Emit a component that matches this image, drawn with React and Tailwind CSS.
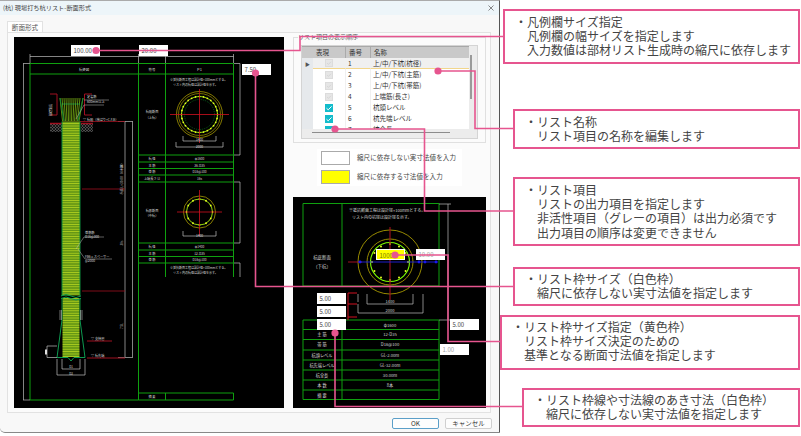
import React from 'react';

const CJK = "font-['Noto_Sans_CJK_JP','Liberation_Sans',sans-serif]";

const rows = [
  { no: 1, name: '上/中/下杭(杭径)', on: false },
  { no: 2, name: '上/中/下杭(主筋)', on: false },
  { no: 3, name: '上/中/下杭(帯筋)', on: false },
  { no: 4, name: '上端筋(長さ)', on: false },
  { no: 5, name: '杭頭レベル', on: true },
  { no: 6, name: '杭先端レベル', on: true },
  { no: 7, name: '杭全長', on: true },
];

const G = '#0fa00f';
const W = '#bdbdbd';
const R = '#a01020';

function Ln({ d, c = G, w = 0.9 }) {
  return <path d={d} fill="none" stroke={c} strokeWidth={w} />;
}

function T({ x, y, s = 3.2, a = 'middle', c = '#d8d8d8', children, rot }) {
  return (
    <text x={x} y={y} fontSize={s} textAnchor={a} fill={c} transform={rot ? `rotate(${rot} ${x} ${y})` : undefined}>
      {children}
    </text>
  );
}

function Rebar({ cx, cy, r, n = 24, dot = 0.9 }) {
  const pts = [];
  for (let i = 0; i < n; i++) {
    const a = (i / n) * Math.PI * 2;
    pts.push(<circle key={i} cx={cx + r * Math.cos(a)} cy={cy + r * Math.sin(a)} r={dot} fill="#e8ff20" />);
  }
  return <g>{pts}</g>;
}

function LeftDrawing() {
  return (
    <svg viewBox="14 37 270 371" className={`w-[270px] h-[371px] block ${CJK}`}>
      <defs>
        <pattern id="mesh" width="2" height="2.4" patternUnits="userSpaceOnUse">
          <rect width="2" height="2.4" fill="#3d6f12" />
          <path d="M1 0V2.4" stroke="#a4d61a" strokeWidth="0.7" />
          <path d="M0 1.2H2" stroke="#d2ec24" strokeWidth="0.6" />
        </pattern>
        <pattern id="gravel" width="3" height="3" patternUnits="userSpaceOnUse">
          <circle cx="1.5" cy="1.5" r="1" fill="none" stroke="#9a9a9a" strokeWidth="0.5" />
        </pattern>
      </defs>

      {/* frame */}
      <Ln d="M30 63.5H233.5M30 74H233.5M30 63.5V400H138.5M138.5 63.5V400M165.5 63.5V277M233.5 63.5V277" w={1} />
      <Ln d="M138.5 155H233.5M138.5 162H233.5M138.5 168.5H233.5M138.5 175H233.5M138.5 182H233.5" w={1} />
      <Ln d="M138.5 243H233.5M138.5 250H233.5M138.5 256.5H233.5M138.5 263H233.5" w={1} />
      <Ln d="M138.5 393H233.5V400H138.5M165.5 393V400" w={1} />

      {/* dimensions */}
      <Ln c={W} w={0.7} d="M30 56.5H233.5M30 54V63M138.5 54V63M165.5 54V63M233.5 54V63" />
      <Ln c={W} w={0.7} d="M23.5 63.5V400M23 63.5H30M23 400H30" />
      <Ln c={W} w={0.7} d="M240 63.5V155M234 63.5H240M234 155H240M240 182V243M234 182H240M234 243H240M240 263V277M234 263H240" />
      <Ln c={W} w={0.7} d="M125 121.5V357M132.5 121.5V357M118 121.5H133M118 357.5H133" />

      <T x={84} y={70.5} s={3.4}>杭姿図</T>
      <T x={152} y={70.5} s={3.4}>符号</T>
      <T x={199.5} y={71} s={4}>P1</T>

      {/* pile head */}
      {[60, 62, 64, 66, 68, 70, 72, 74, 76, 78, 80, 83].map((x, i) => (
        <Ln key={i} c="#8fcf18" w={0.7} d={`M${x} 98L${62.5 + i * 1.5} 121`} />
      ))}
      <Ln c="#0b8a3a" d="M60 98L64 121M83 98L78 121" />
      <Ln c="#1cc060" w={0.6} d="M62 104H80" />
      <Ln c={R} w={1} d="M50 94H57V115H50M92 94H84.5V115H92" />
      <rect x="50" y="123" width="12" height="9" fill="url(#gravel)" />
      <rect x="81" y="123" width="12" height="9" fill="url(#gravel)" />
      <Ln c={R} w={1.4} d="M50 123.5H62M81 123.5H93" />
      <Ln c={R} w={0.8} d="M80 121.5H125" />
      <T x={52} y={110} s={3} rot={-90}>基礎筋長</T>
      <T x={87} y={98} a="start">定着筋</T>
      <T x={87} y={103} a="start">600mm以上</T>
      <Ln c={W} w={0.5} d="M84 100H109M84 105H104M84 105L76 119" />
      <T x={83} y={120.5} a="start">▽ 杭頭（桟ばり+C.F.B）</T>

      {/* pile shaft */}
      <rect x="62" y="121.5" width="18" height="174" fill="url(#mesh)" />
      <rect x="62.5" y="298" width="17" height="59" fill="url(#mesh)" />
      <Ln c="#0b8a3a" d="M62 121.5V296M80 121.5V296M62 298V320M80 298V320" w={1} />
      <Ln c="#0d9a50" w={1} d="M61 296Q66 293 71 296T81 296M61 298.5Q66 295.5 71 298.5T81 298.5" />
      <Ln c={R} w={0.8} d="M82 189H125M82 291H125" />
      <T x={123} y={178} s={3.2} rot={-90}>杭長 L=30.00（6本継）</T>
      <T x={123} y={243} s={3} rot={-90}>30s</T>
      <T x={123} y={326} s={3} rot={-90}>7.5L</T>

      {/* bulb */}
      <Ln c="#0d9a50" w={1} d="M62 320L57 357.5H68L71 361L74 357.5H85L80 320" />
      <Ln c={W} w={0.6} d="M60 310V320M61.5 310V320M82 310V320M80.5 310V320" />
      <Ln c={W} w={0.7} d="M62 359V369H80V359M57 359V375H85V359M47 346H57M47 357.5H57M47 346V357.5" />
      <rect x="45" y="349.5" width="2" height="5" fill="#e0e0e0" />
      <T x={71} y={368} s={3}>D1</T>
      <T x={71} y={374.5} s={3}>D2</T>

      <Ln c={W} w={0.5} d="M76 249L84 237H104M78 249L85 259H112" />
      <T x={85} y={234} a="start">帯筋筋</T>
      <T x={85} y={238} a="start">D16@300</T>
      <T x={85} y={258} a="start">FB6×スペーサー</T>
      <T x={85} y={262} a="start">@2000</T>

      <Ln c={R} w={1} d="M87 341H112M87 358H125" />
      <T x={91} y={340} a="start">▽ 支持層</T>
      <T x={91} y={357} a="start">▽ 杭先端</T>

      {/* top section */}
      <T x={170} y={81} s={3} a="start">※抵抗断面工程は設計径+100mmとする。</T>
      <T x={173} y={85.5} s={3} a="start">リスト内の杭径は設計径を示す。</T>
      <T x={152} y={113}>杭頭断面</T>
      <T x={152} y={118.5}>（上杭）</T>
      <circle cx="199.5" cy="114.5" r="23" fill="none" stroke="#a89a00" strokeWidth="0.8" />
      <circle cx="199.5" cy="114.5" r="21" fill="none" stroke="#a89a00" strokeWidth="0.7" />
      <circle cx="199.5" cy="114.5" r="18" fill="none" stroke="#a6f010" strokeWidth="0.9" />
      <circle cx="199.5" cy="114.5" r="15" fill="none" stroke="#0a7a20" strokeWidth="0.7" strokeDasharray="1 1" />
      <Rebar cx={199.5} cy={114.5} r={18} n={28} />
      <Ln c="#d01020" w={0.8} d="M170 114.5H229M199.5 89V143" />
      <Ln c={W} w={0.7} d="M183 136V141H216V136M176 142V147H223V142" />
      <T x={199.5} y={141}>1400</T>
      <T x={199.5} y={148}>2000</T>
      <T x={199.5} y={160}>φ1600</T>
      <T x={199.5} y={166.5}>36-D35</T>
      <T x={199.5} y={173}>D16@100</T>
      <T x={199.5} y={180}>16s</T>
      <T x={152} y={160}>杭 径</T>
      <T x={152} y={166.5}>主 筋</T>
      <T x={152} y={173}>帯 筋</T>
      <T x={152} y={180}>上端長さ LI</T>

      {/* middle section */}
      <T x={152} y={212}>杭底断面</T>
      <T x={152} y={217}>（中杭）</T>
      <circle cx="199.5" cy="212" r="16" fill="none" stroke="#a89a00" strokeWidth="0.8" />
      <circle cx="199.5" cy="212" r="13" fill="none" stroke="#a6f010" strokeWidth="0.9" />
      <Rebar cx={199.5} cy={212} r={13} n={12} />
      <Ln c="#d01020" w={0.8} d="M177 212H222M199.5 190V236" />
      <Ln c={W} w={0.7} d="M183 231V236H216V231" />
      <T x={199.5} y={237}>1400</T>
      <T x={199.5} y={248}>φ1400</T>
      <T x={199.5} y={254.5}>12-D35</T>
      <T x={199.5} y={261}>D16@100</T>
      <T x={152} y={248}>杭 径</T>
      <T x={152} y={254.5}>主 筋</T>
      <T x={152} y={261}>帯 筋</T>
      <T x={170} y={269} s={3} a="start">※抵抗断面工程は設計径+100mmとする。</T>
      <T x={173} y={274} s={3} a="start">リスト内の杭径は設計径を示す。</T>
      <T x={152} y={398}>摘 要</T>
    </svg>
  );
}

function RightDrawing() {
  return (
    <svg viewBox="293 197 193 211" className={`w-[193px] h-[211px] block ${CJK}`}>
      <Ln w={1} d="M303 286V203.5H439V286M342 203.5V286M303 286H439" />
      <Ln w={1} d="M303 320H439M303 329.5H439M303 339.5H439M303 350H439M303 360H439M303 370H439M303 380H439M303 390H439M303 399.5H439M303 320V399.5M342 320V399.5M439 320V399.5" />
      <Ln c={W} w={0.7} d="M448 204V320M439 204H451M439 320H451" />
      <T x={349} y={212} s={4} a="start">※抵抗断面工程は設計径+100mmとする。</T>
      <T x={352} y={219} s={4} a="start">リスト内の杭径は設計径を示す。</T>
      <T x={322} y={259} s={4.4}>杭底断面</T>
      <T x={322} y={268} s={4.4}>（下杭）</T>

      <circle cx="390" cy="262" r="32" fill="none" stroke="#a89a00" strokeWidth="0.9" />
      <circle cx="390" cy="262" r="23" fill="none" stroke="#a89a00" strokeWidth="0.9" />
      <circle cx="390" cy="262" r="19.5" fill="none" stroke="#7dff00" strokeWidth="1.1" />
      <Rebar cx={390} cy={262} r={18} n={12} dot={1} />
      <Ln c="#a01020" w={1.1} d="M390 227V300M348 262H362" />
      <Ln c="#2020e0" w={0.9} d="M358 262H438" />
      {[360, 419, 425, 436].map(x => (
        <circle key={x} cx={x} cy={262} r={1.4} fill="#1818f0" />
      ))}

      <Ln c="#d01020" w={1} d="M348 293V320M348 293H357M348 304H357M348 317H357" />
      <Ln c={W} w={0.7} d="M358 294V302M367 294V304H413V294M358 304V313H423V294" />
      <T x={390} y={303} s={4}>1400</T>
      <T x={390} y={312} s={4}>2000</T>

      <T x={390} y={326.5} s={4.2}>φ1600</T>
      <T x={390} y={336} s={4.2}>12-D35</T>
      <T x={390} y={346} s={4.2}>D16@100</T>
      <T x={390} y={357} s={4.2}>GL-2.00m</T>
      <T x={390} y={367} s={4.2}>GL-32.00m</T>
      <T x={390} y={377} s={4.2}>30.00m</T>
      <T x={390} y={387} s={4.2}>8本</T>
      <T x={322} y={336} s={4.2}>主 筋</T>
      <T x={322} y={346} s={4.2}>帯 筋</T>
      <T x={322} y={357} s={4.2}>杭頭レベル</T>
      <T x={322} y={367} s={4.2}>杭先端レベル</T>
      <T x={322} y={377} s={4.2}>杭全長</T>
      <T x={322} y={387} s={4.2}>本 数</T>
      <T x={322} y={397} s={4.2}>摘 要</T>
    </svg>
  );
}

function Check({ on }) {
  return (
    <div className={`w-[8px] h-[8px] flex items-center justify-center ${on ? 'bg-[#14bccb]' : 'bg-[#e6e6e6] border border-[#dcdcdc]'}`}>
      <svg viewBox="0 0 8 8" className="w-[8px] h-[8px]">
        <path d="M1.5 4.2L3.2 5.8L6.6 2.4" fill="none" stroke={on ? '#ffffff' : '#cfcfcf'} strokeWidth="1" />
      </svg>
    </div>
  );
}

function Grid() {
  return (
    <div className="relative mx-[7px] mt-[7px] w-[177px] h-[94px] bg-[#ececec] border border-[#d4d4d4] text-[6.5px] leading-[11px] text-[#333]">
      <div className="flex h-[12px] w-[167px] bg-[#c9c9c9] border-t border-[#a8a8a8]">
        <div className="w-[11px]" />
        <div className="w-[33px] pl-[3px] border-r border-[#aaa]">表現</div>
        <div className="w-[25px] pl-[3px] border-r border-[#aaa]">番号</div>
        <div className="flex-1 pl-[3px]">名称</div>
      </div>
      <div className="w-[167px] h-[71px] overflow-hidden">
        {rows.map(r => (
          <div key={r.no} className={`flex h-[11px] ${r.no === 1 ? 'bg-[#f0f0f0]' : 'bg-white'}`}>
            <div className="w-[11px] bg-[#e6e9ec] flex items-center justify-center text-[5px] text-[#555]">
              {r.no === 1 ? '▶' : ''}
            </div>
            <div className={`w-[33px] flex items-center justify-center border-r border-[#f0f0f0] ${r.no === 1 ? 'border-b border-b-[#f2d68c]' : ''}`}>
              <Check on={r.on} />
            </div>
            <div className={`w-[25px] pl-[2px] border-r border-[#f0f0f0] ${r.no === 1 ? 'border-b border-b-[#f2d68c]' : ''}`}>{r.no}</div>
            <div className={`flex-1 pl-[2px] whitespace-nowrap ${r.no === 1 ? 'border-b border-b-[#f2d68c]' : ''}`}>{r.name}</div>
          </div>
        ))}
      </div>
      {/* scrollbars */}
      <div className="absolute right-[5px] top-[9px] w-[2px] h-[44px] bg-[#9a9a9a]" />
      <div className="absolute left-[10px] bottom-[5px] w-[138px] h-[1px] bg-[#8c8c8c]" />
    </div>
  );
}

function Box({ cls, children, dim, yellow }) {
  return (
    <div className={`absolute w-[29px] h-[11px] pl-[2.5px] text-[6px] leading-[11px] ${yellow ? 'bg-[#ffff00] border border-white text-[#777700]' : 'bg-white'} ${dim ? 'text-[#a0a0a0]' : 'text-[#444]'} ${cls}`}>
      {children}
    </div>
  );
}

function Callout({ cls, children }) {
  return (
    <div className={`border-2 border-[#e6558f] bg-white text-[12px] leading-[14.2px] text-[#444] whitespace-pre font-['Noto_Sans_CJK_JP',sans-serif] ${cls}`}>
      {children}
    </div>
  );
}

function Leaders() {
  const paths = [
    'M96 50.5H300V36.5H503',
    'M438 71H475V128.5H513',
    'M335 129H424.5V211H513',
    'M255.5 73V286.5H513',
    'M395 255H448V341.5H500',
    'M335 333V406.5H522',
  ];
  const dots = [[96, 50.5], [438, 71], [335, 129], [255.5, 73], [395, 255], [335, 333]];
  return (
    <svg viewBox="0 0 801 436" className="absolute inset-0 w-[801px] h-[436px] pointer-events-none">
      {paths.map((d, i) => (
        <path key={i} d={d} fill="none" stroke="#e6558f" strokeWidth="1.6" />
      ))}
      {dots.map(([x, y], i) => (
        <circle key={i} cx={x} cy={y} r="3.6" fill="#e6558f" />
      ))}
    </svg>
  );
}

export default function App() {
  return (
    <div className={`relative w-[801px] h-[436px] bg-white flex overflow-hidden ${CJK}`}>
      {/* dialog */}
      <div className="w-[500px] h-[433px] bg-[#f8f8f8] border-r border-[#555] border-t border-t-[#aaa] border-b border-b-[#888] rounded-bl-[5px] flex flex-col shrink-0">
        <div className="h-[14px] bg-[#edf5f9] flex items-center justify-between pl-[3px] pr-[5px] text-[6.2px] text-[#444]">
          <span>(杭) 現場打ち杭リスト-断面形式</span>
          <svg viewBox="0 0 6 6" className="w-[6px] h-[6px]">
            <path d="M0.5 0.5L5.5 5.5M5.5 0.5L0.5 5.5" stroke="#555" strokeWidth="0.7" />
          </svg>
        </div>
        <div className="flex pl-[7px] pt-[6px] h-[17px]">
          <div className="w-[36px] bg-white border border-b-0 border-[#e2e2e2] text-[6.6px] leading-[11px] text-center text-[#555]">断面形式</div>
        </div>
        <div className="mx-[7px] w-[484px] h-[381px] border border-[#e2e2e2] bg-[#fbfbfb] pl-[6px] pt-[4px] flex gap-[9px]">
          <div className="relative w-[270px] h-[371px] bg-black shrink-0">
            <LeftDrawing />
            <Box cls="left-[57px] top-[8px]">100.00</Box>
            <Box cls="left-[125px] top-[8px]">20.00</Box>
            <Box cls="left-[228px] top-[27px]">7.50</Box>
          </div>
          <div className="w-[193px] flex flex-col">
            <div className="relative h-[106px] border border-[#e0e0e0]">
              <span className="absolute left-[4px] top-[-5px] text-[6px] leading-[8px] text-[#555] bg-[#fbfbfb]">リスト項目の表示順序</span>
              <Grid />
            </div>
            <div className="mt-[6px] mx-[24px] h-[37px] bg-white flex flex-col justify-center gap-[5px] pl-[4px] text-[6.5px] tracking-[0.1px] text-[#444]">
              <div className="flex items-center gap-[7px]">
                <div className="w-[29px] h-[14px] bg-white border border-[#aaa]" />
                <span>縮尺に依存しない実寸法値を入力</span>
              </div>
              <div className="flex items-center gap-[7px]">
                <div className="w-[29px] h-[14px] bg-[#ffff00] border border-[#aaa]" />
                <span>縮尺に依存する寸法値を入力</span>
              </div>
            </div>
            <div className="relative mt-[11px] h-[211px] bg-black">
              <RightDrawing />
              <Box yellow cls="left-[83px] top-[52px]">1000</Box>
              <Box dim cls="left-[123px] top-[52px]">10.00</Box>
              <Box cls="left-[24px] top-[96px]">5.00</Box>
              <Box cls="left-[24px] top-[109px]">5.00</Box>
              <Box cls="left-[24px] top-[122px]">5.00</Box>
              <Box cls="left-[157px] top-[122px]">5.00</Box>
              <Box dim cls="left-[147px] top-[147px]">1.00</Box>
            </div>
          </div>
        </div>
        <div className="flex justify-end gap-[6px] pr-[7px] pt-[5px] text-[6.5px] text-[#333]">
          <button className="w-[47px] h-[11px] leading-[9px] bg-[#fdfdfd] border border-[#5b9fc8] rounded-[2px]">OK</button>
          <button className="w-[47px] h-[11px] leading-[9px] bg-[#fdfdfd] border border-[#d0d0d0] rounded-[2px]">キャンセル</button>
        </div>
      </div>

      {/* notes */}
      <div className="flex-1 flex flex-col items-end pt-[9px] pr-[1px]">
        <Callout cls="w-[297px] h-[55px] pl-[10px] pt-[4px]">{'・凡例欄サイズ指定\n　凡例欄の幅サイズを指定します\n　入力数値は部材リスト生成時の縮尺に依存します'}</Callout>
        <Callout cls="mt-[45px] w-[287px] h-[40px] pl-[10px] pt-[4px]">{'・リスト名称\n　リスト項目の名称を編集します'}</Callout>
        <Callout cls="mt-[28px] w-[287px] h-[69px] pl-[10px] pt-[4px]">{'・リスト項目\n　リストの出力項目を指定します\n　非活性項目（グレーの項目）は出力必須です\n　出力項目の順序は変更できません'}</Callout>
        <Callout cls="mt-[21px] w-[287px] h-[39px] pl-[10px] pt-[3px]">{'・リスト枠サイズ（白色枠）\n　縮尺に依存しない実寸法値を指定します'}</Callout>
        <Callout cls="mt-[9px] w-[300px] h-[55px] pl-[10px] pt-[3px]">{'・リスト枠サイズ指定（黄色枠）\n　リスト枠サイズ決定のための\n　基準となる断面寸法値を指定します'}</Callout>
        <Callout cls="mt-[18px] w-[278px] h-[39px] pl-[10px] pt-[3px]">{'・リスト枠線や寸法線のあき寸法（白色枠）\n　縮尺に依存しない実寸法値を指定します'}</Callout>
      </div>

      <Leaders />
    </div>
  );
}
